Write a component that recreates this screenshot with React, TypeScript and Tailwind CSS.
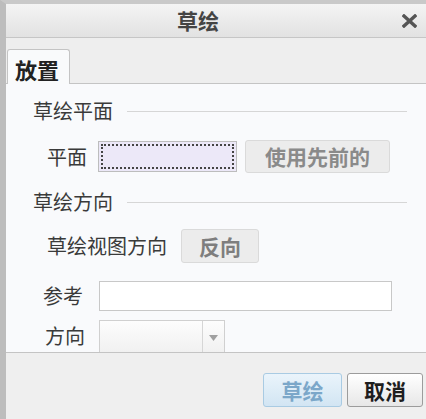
import React from "react";

const font = "font-['Noto_Sans_CJK_SC','Noto_Sans',sans-serif]";

function Heading({ text }: { text: string }) {
  return (
    <div className="flex items-center h-[20px] ml-[27px] mr-[19px]">
      <span className="text-[20px] leading-[20px] text-[#3a3a3a]">{text}</span>
      <div className="flex-1 h-px bg-[#d6d6d6] ml-[14px]" />
    </div>
  );
}

export default function App() {
  return (
    <div
      className={`${font} w-[426px] h-[419px] flex flex-col border-t-4 border-t-[#c9c9c9] border-l-[6px] border-l-[#bdbdbd] bg-[#efefef] overflow-hidden`}
    >
      {/* title bar */}
      <div className="h-[34px] shrink-0 flex items-center border-b border-b-[#c6c6c6] bg-linear-to-b from-[#f4f4f4] to-[#e2e2e2]">
        <span className="ml-[171px] text-[21px] leading-[21px] font-bold text-[#444]">草绘</span>
        <div className="flex-1" />
        <svg width="15" height="14" viewBox="0 0 15 14" className="mr-[9px] mt-[1px]">
          <path d="M2 2 L13 12 M13 2 L2 12" stroke="#555" strokeWidth="3.4" strokeLinecap="square" />
        </svg>
      </div>

      {/* tab strip */}
      <div className="h-[45px] shrink-0 flex items-end bg-[#eeeeee]">
        <div className="relative z-10 -mb-px ml-px w-[63px] h-[35px] border border-b-0 border-[#c4c4c4] rounded-t-[3px] bg-[#f9fafb] flex items-center pl-[7px] pt-[3px]">
          <span className="text-[22px] leading-[22px] font-bold text-[#222]">放置</span>
        </div>
      </div>

      {/* panel */}
      <div className="h-[270px] shrink-0 border-t border-b border-[#c4c4c4] bg-[#f9fafc] flex flex-col pt-[17px]">
        <Heading text="草绘平面" />

        <div className="mt-[19px] h-[33px] flex items-center">
          <span className="ml-[41px] text-[20px] leading-[20px] text-[#3a3a3a]">平面</span>
          <div className="ml-[11px] w-[139px] h-[31px] border border-[#bdbdbd] bg-[#ece8f8] p-[2px]">
            <div className="w-full h-full border-2 border-dotted border-[#444]" />
          </div>
          <div className="ml-[8px] w-[145px] h-[33px] rounded-[3px] border border-[#dadada] bg-[#ececec] flex items-center justify-center">
            <span className="text-[21px] leading-[21px] font-bold text-[#8a8a8a]">使用先前的</span>
          </div>
        </div>

        <div className="mt-[19px]">
          <Heading text="草绘方向" />
        </div>

        <div className="mt-[17px] h-[34px] flex items-center">
          <span className="ml-[41px] text-[20px] leading-[20px] text-[#3a3a3a]">草绘视图方向</span>
          <div className="ml-[14px] w-[78px] h-[34px] rounded-[3px] border border-[#dadada] bg-[#ececec] flex items-center justify-center">
            <span className="text-[21px] leading-[21px] font-bold text-[#7e7e7e]">反向</span>
          </div>
        </div>

        <div className="mt-[18px] h-[30px] flex items-center">
          <span className="ml-[37px] text-[20px] leading-[20px] text-[#3a3a3a]">参考</span>
          <div className="ml-[16px] w-[293px] h-[30px] border border-[#c8c8c8] bg-white" />
        </div>

        <div className="mt-[9px] h-[32px] flex items-center">
          <span className="ml-[39px] text-[20px] leading-[20px] text-[#3a3a3a]">方向</span>
          <div className="ml-[14px] w-[126px] h-[32px] border border-b-0 border-[#d0d0d0] bg-linear-to-b from-[#fdfdfd] to-[#f1f1f1] flex">
            <div className="w-[103px] h-full border-r border-[#d6d6d6]" />
            <div className="flex-1 flex items-center justify-center pt-[2px]">
              <svg width="9" height="6" viewBox="0 0 9 6">
                <path d="M0 0 H9 L4.5 6 Z" fill="#a0a0a0" />
              </svg>
            </div>
          </div>
        </div>
      </div>

      {/* footer */}
      <div className="flex-1 flex justify-end items-start pt-[20px] pr-[3px] gap-[5px] bg-[#efefef]">
        <div className="w-[79px] h-[34px] rounded-[3px] border border-[#a9cbe3] bg-linear-to-b from-[#eaf4fb] to-[#d2e5f3] flex items-center justify-center">
          <span className="text-[21px] leading-[21px] font-bold text-[#7ba7c9]">草绘</span>
        </div>
        <div className="w-[76px] h-[34px] rounded-[3px] border border-[#9c9c9c] bg-linear-to-b from-[#ffffff] to-[#e7e7e7] flex items-center justify-center">
          <span className="text-[21px] leading-[21px] font-bold text-[#1e1e1e]">取消</span>
        </div>
      </div>
    </div>
  );
}
